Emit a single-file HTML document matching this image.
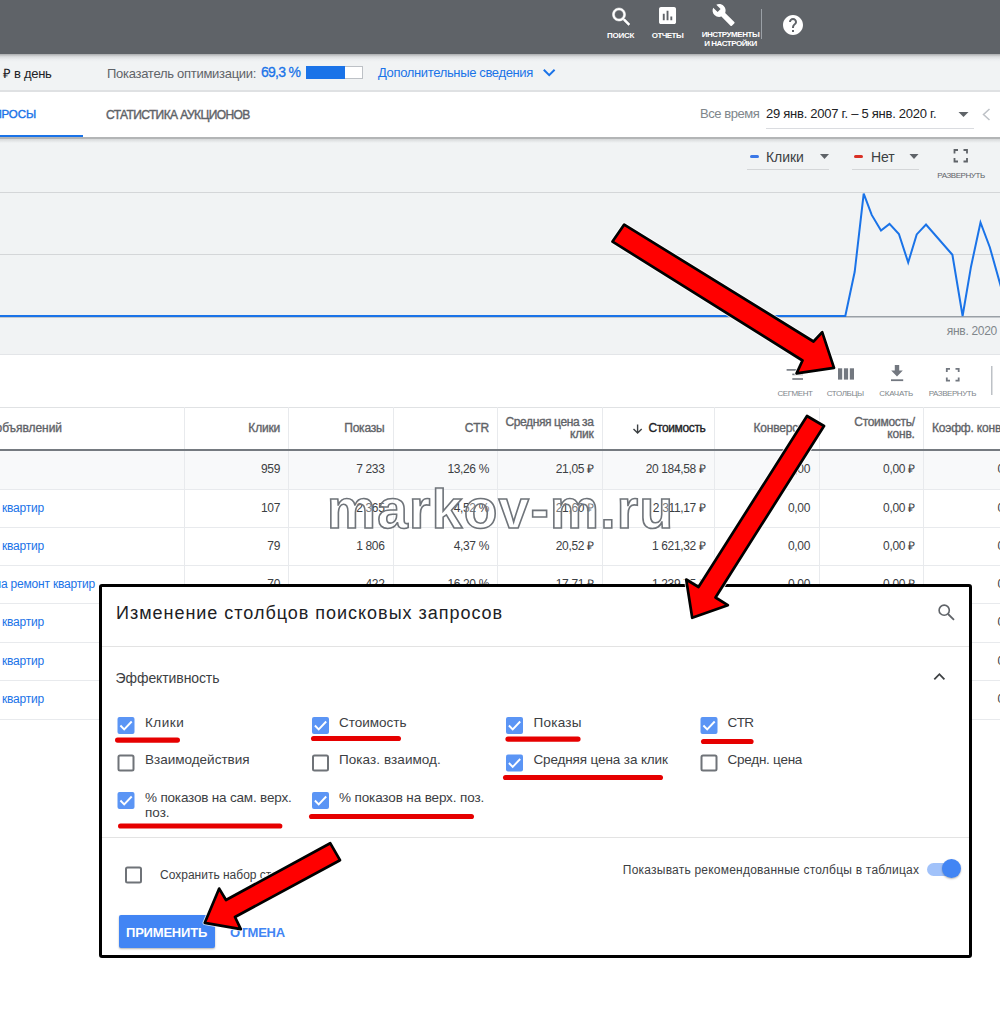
<!DOCTYPE html>
<html><head><meta charset="utf-8"><style>
html,body{margin:0;padding:0;}
body{width:1000px;height:1017px;position:relative;overflow:hidden;background:#fff;font-family:"Liberation Sans",sans-serif;}
.t{position:absolute;white-space:nowrap;}
.r{position:absolute;}
svg{position:absolute;overflow:visible;}
</style></head><body>

<div class="r" style="left:0px;top:53px;width:1000px;height:38px;background:#f1f3f4;"></div>
<div class="r" style="left:0px;top:53.5px;width:1000px;height:8px;background:linear-gradient(#aaacae,#dcdee0 35%,#eceef0 70%,#f1f3f4);"></div>
<div class="r" style="left:0px;top:0px;width:1000px;height:53.5px;background:#5f6368;"></div>
<div class="r" style="left:0px;top:90px;width:1000px;height:2px;background:#dfe1e3;"></div>
<svg style="left:0;top:0" width="1000" height="53">
<path transform="translate(609.5,5) scale(1)" fill="#fff" stroke="#fff" stroke-width="0.5" d="M15.5 14h-.79l-.28-.27C15.41 12.59 16 11.11 16 9.5 16 5.91 13.09 3 9.5 3S3 5.91 3 9.5 5.91 16 9.5 16c1.61 0 3.09-.59 4.23-1.57l.27.28v.79l5 4.99L20.49 19l-4.99-5zm-6 0C7.01 14 5 11.99 5 9.5S7.01 5 9.5 5 14 7.01 14 9.5 11.99 14 9.5 14z"/>
<path transform="translate(656.2,4.2) scale(0.944)" fill="#fff" d="M19 3H5c-1.1 0-2 .9-2 2v14c0 1.1.9 2 2 2h14c1.1 0 2-.9 2-2V5c0-1.1-.9-2-2-2zM9 17H7v-7h2v7zm4 0h-2V7h2v10zm4 0h-2v-4h2v4z"/>
<path transform="translate(711.6,3) scale(1.0)" fill="#fff" d="M22.7 19l-9.1-9.1c.9-2.3.4-5-1.5-6.9-2-2-5-2.4-7.4-1.3L9 6 6 9 1.6 4.7C.4 7.1.9 10.1 2.9 12.1c1.9 1.9 4.6 2.4 6.9 1.5l9.1 9.1c.4.4 1 .4 1.4 0l2.3-2.3c.5-.4.5-1.1.1-1.4z"/>
<rect x="761" y="9" width="1" height="30" fill="#9aa0a6"/>
<path transform="translate(781,12.9)" fill="#fff" d="M12 2C6.48 2 2 6.48 2 12s4.48 10 10 10 10-4.48 10-10S17.52 2 12 2zm1 17h-2v-2h2v2zm2.07-7.750l-.9.92C13.45 12.9 13 13.5 13 15h-2v-.5c0-1.1.45-2.1 1.17-2.83l1.24-1.26c.37-.36.59-.86.59-1.41 0-1.1-.9-2-2-2s-2 .9-2 2H8c0-2.21 1.790-4 4-4s4 1.79 4 4c0 .88-.36 1.68-.93 2.25z"/>
</svg>
<div class="t" style="left:420.5px;width:400px;text-align:center;top:32.23px;font-size:8px;line-height:8px;color:#fff;font-weight:700;letter-spacing:-0.25px;">ПОИСК</div>
<div class="t" style="left:467.5px;width:400px;text-align:center;top:31.73px;font-size:8px;line-height:8px;color:#fff;font-weight:700;letter-spacing:-0.55px;">ОТЧЕТЫ</div>
<div class="t" style="left:530.5px;width:400px;text-align:center;top:31.23px;font-size:8px;line-height:8px;color:#fff;font-weight:700;letter-spacing:-0.45px;">ИНСТРУМЕНТЫ</div>
<div class="t" style="left:530.5px;width:400px;text-align:center;top:40.23px;font-size:8px;line-height:8px;color:#fff;font-weight:700;letter-spacing:-0.45px;">И НАСТРОЙКИ</div>
<div class="t" style="left:3px;top:66.80px;font-size:13px;line-height:13px;color:#202124;font-weight:400;letter-spacing:-0.3px;">₽ в день</div>
<div class="t" style="left:107px;top:66.80px;font-size:13px;line-height:13px;color:#5f6368;font-weight:400;letter-spacing:-0.28px;">Показатель оптимизации:</div>
<div class="t" style="left:261px;top:65.35px;font-size:14px;line-height:14px;color:#1a73e8;font-weight:400;letter-spacing:-0.75px;-webkit-text-stroke:0.3px currentColor;">69,3 %</div>
<div class="r" style="left:305.5px;top:66.3px;width:57.5px;height:12.5px;background:#fff;box-sizing:border-box;border:1px solid #bdc1c6;"></div>
<div class="r" style="left:305.5px;top:66.3px;width:39px;height:12.5px;background:#1a73e8;"></div>
<div class="t" style="left:378px;top:65.80px;font-size:13px;line-height:13px;color:#1a73e8;font-weight:400;letter-spacing:-0.35px;">Дополнительные сведения</div>
<svg style="left:0;top:0" width="1000" height="100">
<path d="M543.8 69.8 L549.2 75.2 L554.6 69.8" fill="none" stroke="#1a73e8" stroke-width="2"/>
</svg>
<div class="r" style="left:0px;top:92px;width:1000px;height:45px;background:#fff;"></div>
<div class="r" style="left:0px;top:135px;width:83px;height:2.5px;background:#1a73e8;"></div>
<div class="r" style="left:0px;top:137px;width:1000px;height:1.5px;background:#b3b5b6;"></div>
<div class="r" style="left:0px;top:138.5px;width:1000px;height:4px;background:linear-gradient(#d6d8d9,#f1f3f4);"></div>
<div class="t" style="right:964px;text-align:right;top:109.27px;font-size:11.5px;line-height:11.5px;color:#1a73e8;font-weight:400;letter-spacing:-0.1px;-webkit-text-stroke:0.4px currentColor;">ЗАПРОСЫ</div>
<div class="t" style="left:106px;top:108.84px;font-size:12px;line-height:12px;color:#5f6368;font-weight:400;letter-spacing:-0.6px;-webkit-text-stroke:0.4px currentColor;">СТАТИСТИКА АУКЦИОНОВ</div>
<div class="t" style="left:700px;top:106.50px;font-size:13px;line-height:13px;color:#80868b;font-weight:400;letter-spacing:-0.45px;">Все время</div>
<div class="t" style="left:766px;top:106.50px;font-size:13px;line-height:13px;color:#202124;font-weight:400;letter-spacing:-0.26px;">29 янв. 2007 г. – 5 янв. 2020 г.</div>
<div class="r" style="left:766px;top:127.5px;width:208px;height:1px;background:#dadce0;"></div>
<svg style="left:0;top:0" width="1000" height="140">
<path d="M958.5 112 L968.5 112 L963.5 117z" fill="#5f6368"/>
<path d="M989.5 109 L983.5 114.5 L989.5 120" fill="none" stroke="#bdc1c6" stroke-width="1.5"/>
</svg>
<div class="r" style="left:0px;top:142.5px;width:1000px;height:211.5px;background:#f1f3f4;"></div>
<div class="r" style="left:747px;top:169px;width:82px;height:1px;background:#d4d6d8;"></div>
<div class="r" style="left:852px;top:169px;width:67px;height:1px;background:#d4d6d8;"></div>
<div class="r" style="left:749.8px;top:154.9px;width:9px;height:3.6px;background:#3b78e7;border-radius:1.8px;"></div>
<div class="r" style="left:854.2px;top:154.9px;width:9.2px;height:3.6px;background:#d93025;border-radius:1.8px;"></div>
<div class="t" style="left:766px;top:149.65px;font-size:14px;line-height:14px;color:#3c4043;font-weight:400;letter-spacing:-0.05px;">Клики</div>
<div class="t" style="left:871px;top:149.65px;font-size:14px;line-height:14px;color:#3c4043;font-weight:400;letter-spacing:-0.1px;">Нет</div>
<div class="t" style="left:761px;width:400px;text-align:center;top:171.73px;font-size:8px;line-height:8px;color:#5f6368;font-weight:400;letter-spacing:-0.45px;">РАЗВЕРНУТЬ</div>
<svg style="left:0;top:0" width="1000" height="360">
<path d="M820 154 L829 154 L824.5 159z" fill="#5f6368"/>
<path d="M909.5 154 L918.5 154 L914 159z" fill="#5f6368"/>
<path d="M954.5 153.5 v-3.5 h3.5 M963.5 150 h3.5 v3.5 M967 158 v3.5 h-3.5 M958 161.5 h-3.5 v-3.5" fill="none" stroke="#5f6368" stroke-width="1.8"/>
<rect x="0" y="192" width="1000" height="1" fill="#d4d6d8"/>
<rect x="0" y="254" width="1000" height="1" fill="#d4d6d8"/>
<rect x="0" y="316" width="1000" height="1.5" fill="#9aa0a6"/>
<polyline points="0,316 845.3,316 854.7,271.8 863.7,193.6 871.7,214.9 881,230.5 889.5,223.9 898.9,234 908.2,262.5 916.7,234.4 926,224.6 952.4,254.8 962.6,316 971,266.7 980.5,222.5 989.8,247.2 1001,287" fill="none" stroke="#1a73e8" stroke-width="2" stroke-linejoin="miter"/>
</svg>
<div class="t" style="right:3px;text-align:right;top:325.14px;font-size:12px;line-height:12px;color:#80868b;font-weight:400;letter-spacing:-0.3px;">янв. 2020</div>
<div class="r" style="left:0px;top:354px;width:1000px;height:53px;background:#fff;"></div>
<div class="r" style="left:0px;top:354px;width:1000px;height:1px;background:#e3e5e8;"></div>
<div class="t" style="left:595px;width:400px;text-align:center;top:390.23px;font-size:8px;line-height:8px;color:#80868b;font-weight:400;letter-spacing:-0.4px;">СЕГМЕНТ</div>
<div class="t" style="left:645.2px;width:400px;text-align:center;top:390.23px;font-size:8px;line-height:8px;color:#80868b;font-weight:400;letter-spacing:-0.4px;">СТОЛБЦЫ</div>
<div class="t" style="left:696.2px;width:400px;text-align:center;top:390.23px;font-size:8px;line-height:8px;color:#80868b;font-weight:400;letter-spacing:-0.2px;">СКАЧАТЬ</div>
<div class="t" style="left:752.4px;width:400px;text-align:center;top:390.23px;font-size:8px;line-height:8px;color:#80868b;font-weight:400;letter-spacing:-0.45px;">РАЗВЕРНУТЬ</div>
<svg style="left:0;top:0" width="1000" height="410">
<rect x="786.6" y="369.1" width="11.5" height="1.6" fill="#737880"/>
<rect x="792.3" y="373.6" width="10.7" height="1.6" fill="#737880"/>
<rect x="792.3" y="378.2" width="10.7" height="1.6" fill="#737880"/>
<rect x="838" y="368.3" width="4.2" height="11.3" fill="#737880"/>
<rect x="843.9" y="368.3" width="4.2" height="11.3" fill="#737880"/>
<rect x="849.8" y="368.3" width="4.2" height="11.3" fill="#737880"/>
<path d="M894.8 365 h4.4 v5.5 h3.6 l-5.8 6 -5.8-6 h3.6z" fill="#737880"/>
<rect x="891" y="379.3" width="12.2" height="1.8" fill="#737880"/>
<path d="M946.8 372 v-3.2 h3.2 M955.5 368.8 h3.2 v3.2 M958.7 377.5 v3.2 h-3.2 M950 380.7 h-3.2 v-3.2" fill="none" stroke="#737880" stroke-width="1.8"/>
<rect x="991" y="366" width="1.5" height="29" fill="#bdc1c6"/>
</svg>
<div class="r" style="left:0px;top:406.5px;width:1000px;height:1px;background:#e0e2e4;"></div>
<div class="r" style="left:0px;top:451px;width:1000px;height:38px;background:#f8f9fa;"></div>
<div class="r" style="left:0px;top:488.6px;width:1000px;height:1px;background:#e8eaed;"></div>
<div class="r" style="left:0px;top:527.2px;width:1000px;height:1px;background:#e8eaed;"></div>
<div class="r" style="left:0px;top:565.3px;width:1000px;height:1px;background:#e8eaed;"></div>
<div class="r" style="left:0px;top:603.4px;width:1000px;height:1px;background:#e8eaed;"></div>
<div class="r" style="left:0px;top:641.8px;width:1000px;height:1px;background:#e8eaed;"></div>
<div class="r" style="left:0px;top:680.4px;width:1000px;height:1px;background:#e8eaed;"></div>
<div class="r" style="left:0px;top:718.5px;width:1000px;height:1px;background:#e8eaed;"></div>
<div class="r" style="left:183.5px;top:407px;width:1px;height:312px;background:#e8eaed;"></div>
<div class="r" style="left:288px;top:407px;width:1px;height:312px;background:#e8eaed;"></div>
<div class="r" style="left:392.5px;top:407px;width:1px;height:312px;background:#e8eaed;"></div>
<div class="r" style="left:497px;top:407px;width:1px;height:312px;background:#e8eaed;"></div>
<div class="r" style="left:601.5px;top:407px;width:1px;height:312px;background:#e8eaed;"></div>
<div class="r" style="left:714px;top:407px;width:1px;height:312px;background:#e8eaed;"></div>
<div class="r" style="left:818.5px;top:407px;width:1px;height:312px;background:#e8eaed;"></div>
<div class="r" style="left:922.5px;top:407px;width:1px;height:312px;background:#e8eaed;"></div>
<div class="r" style="left:0px;top:448.8px;width:1000px;height:2px;background:#757a80;"></div>
<div class="t" style="right:938px;text-align:right;top:422.34px;font-size:12px;line-height:12px;color:#5f6368;font-weight:400;letter-spacing:-0.05px;-webkit-text-stroke:0.35px currentColor;">объявлений</div>
<div class="t" style="right:720px;text-align:right;top:422.34px;font-size:12px;line-height:12px;color:#5f6368;font-weight:400;letter-spacing:-0.2px;-webkit-text-stroke:0.35px currentColor;">Клики</div>
<div class="t" style="right:615.5px;text-align:right;top:422.34px;font-size:12px;line-height:12px;color:#5f6368;font-weight:400;letter-spacing:-0.2px;-webkit-text-stroke:0.35px currentColor;">Показы</div>
<div class="t" style="right:511px;text-align:right;top:422.34px;font-size:12px;line-height:12px;color:#5f6368;font-weight:400;letter-spacing:-0.1px;-webkit-text-stroke:0.35px currentColor;">CTR</div>
<div class="t" style="right:406.5px;text-align:right;top:415.64px;font-size:12px;line-height:12px;color:#5f6368;font-weight:400;letter-spacing:-0.4px;-webkit-text-stroke:0.35px currentColor;">Средняя цена за</div>
<div class="t" style="right:406.5px;text-align:right;top:428.24px;font-size:12px;line-height:12px;color:#5f6368;font-weight:400;letter-spacing:-0.2px;-webkit-text-stroke:0.35px currentColor;">клик</div>
<div class="t" style="right:294.5px;text-align:right;top:422.44px;font-size:12px;line-height:12px;color:#202124;font-weight:400;letter-spacing:-0.35px;-webkit-text-stroke:0.35px currentColor;">Стоимость</div>
<svg style="left:0;top:0" width="1000" height="450">
<path d="M637.6 424.5 v8.5 M633.5 429 l4.1 4.1 4.1-4.1" fill="none" stroke="#3c4043" stroke-width="1.4"/>
</svg>
<div class="t" style="left:753.5px;top:422.34px;font-size:12px;line-height:12px;color:#5f6368;font-weight:400;letter-spacing:-0.2px;-webkit-text-stroke:0.35px currentColor;">Конверсии</div>
<div class="t" style="right:85.29999999999995px;text-align:right;top:415.64px;font-size:12px;line-height:12px;color:#5f6368;font-weight:400;letter-spacing:-0.3px;-webkit-text-stroke:0.35px currentColor;">Стоимость/</div>
<div class="t" style="right:85.29999999999995px;text-align:right;top:428.24px;font-size:12px;line-height:12px;color:#5f6368;font-weight:400;letter-spacing:-0.2px;-webkit-text-stroke:0.35px currentColor;">конв.</div>
<div class="t" style="left:932px;top:422.34px;font-size:12px;line-height:12px;color:#5f6368;font-weight:400;letter-spacing:-0.2px;-webkit-text-stroke:0.35px currentColor;">Коэфф. конверсии</div>
<div class="t" style="right:720px;text-align:right;top:463.34px;font-size:12px;line-height:12px;color:#3c4043;font-weight:400;letter-spacing:-0.35px;">959</div>
<div class="t" style="right:615.5px;text-align:right;top:463.34px;font-size:12px;line-height:12px;color:#3c4043;font-weight:400;letter-spacing:-0.35px;">7 233</div>
<div class="t" style="right:511px;text-align:right;top:463.34px;font-size:12px;line-height:12px;color:#3c4043;font-weight:400;letter-spacing:-0.35px;">13,26 %</div>
<div class="t" style="right:406.29999999999995px;text-align:right;top:463.34px;font-size:12px;line-height:12px;color:#3c4043;font-weight:400;letter-spacing:-0.35px;">21,05 ₽</div>
<div class="t" style="right:294.5px;text-align:right;top:463.34px;font-size:12px;line-height:12px;color:#3c4043;font-weight:400;letter-spacing:-0.35px;">20 184,58 ₽</div>
<div class="t" style="right:190px;text-align:right;top:463.34px;font-size:12px;line-height:12px;color:#3c4043;font-weight:400;letter-spacing:-0.35px;">0,00</div>
<div class="t" style="right:85.29999999999995px;text-align:right;top:463.34px;font-size:12px;line-height:12px;color:#3c4043;font-weight:400;letter-spacing:-0.35px;">0,00 ₽</div>
<div class="t" style="left:997.5px;top:463.34px;font-size:12px;line-height:12px;color:#3c4043;font-weight:400;letter-spacing:-0.3px;">0,00 %</div>
<div class="t" style="right:956px;text-align:right;top:502.04px;font-size:12px;line-height:12px;color:#1a73e8;font-weight:400;letter-spacing:-0.2px;">квартир</div>
<div class="t" style="right:720px;text-align:right;top:502.04px;font-size:12px;line-height:12px;color:#3c4043;font-weight:400;letter-spacing:-0.35px;">107</div>
<div class="t" style="right:615.5px;text-align:right;top:502.04px;font-size:12px;line-height:12px;color:#3c4043;font-weight:400;letter-spacing:-0.35px;">2 365</div>
<div class="t" style="right:511px;text-align:right;top:502.04px;font-size:12px;line-height:12px;color:#3c4043;font-weight:400;letter-spacing:-0.35px;">4,52 %</div>
<div class="t" style="right:406.29999999999995px;text-align:right;top:502.04px;font-size:12px;line-height:12px;color:#3c4043;font-weight:400;letter-spacing:-0.35px;">21,60 ₽</div>
<div class="t" style="right:294.5px;text-align:right;top:502.04px;font-size:12px;line-height:12px;color:#3c4043;font-weight:400;letter-spacing:-0.35px;">2 311,17 ₽</div>
<div class="t" style="right:190px;text-align:right;top:502.04px;font-size:12px;line-height:12px;color:#3c4043;font-weight:400;letter-spacing:-0.35px;">0,00</div>
<div class="t" style="right:85.29999999999995px;text-align:right;top:502.04px;font-size:12px;line-height:12px;color:#3c4043;font-weight:400;letter-spacing:-0.35px;">0,00 ₽</div>
<div class="t" style="left:997.5px;top:502.04px;font-size:12px;line-height:12px;color:#3c4043;font-weight:400;letter-spacing:-0.3px;">0,00 %</div>
<div class="t" style="right:956px;text-align:right;top:539.84px;font-size:12px;line-height:12px;color:#1a73e8;font-weight:400;letter-spacing:-0.2px;">квартир</div>
<div class="t" style="right:720px;text-align:right;top:539.84px;font-size:12px;line-height:12px;color:#3c4043;font-weight:400;letter-spacing:-0.35px;">79</div>
<div class="t" style="right:615.5px;text-align:right;top:539.84px;font-size:12px;line-height:12px;color:#3c4043;font-weight:400;letter-spacing:-0.35px;">1 806</div>
<div class="t" style="right:511px;text-align:right;top:539.84px;font-size:12px;line-height:12px;color:#3c4043;font-weight:400;letter-spacing:-0.35px;">4,37 %</div>
<div class="t" style="right:406.29999999999995px;text-align:right;top:539.84px;font-size:12px;line-height:12px;color:#3c4043;font-weight:400;letter-spacing:-0.35px;">20,52 ₽</div>
<div class="t" style="right:294.5px;text-align:right;top:539.84px;font-size:12px;line-height:12px;color:#3c4043;font-weight:400;letter-spacing:-0.35px;">1 621,32 ₽</div>
<div class="t" style="right:190px;text-align:right;top:539.84px;font-size:12px;line-height:12px;color:#3c4043;font-weight:400;letter-spacing:-0.35px;">0,00</div>
<div class="t" style="right:85.29999999999995px;text-align:right;top:539.84px;font-size:12px;line-height:12px;color:#3c4043;font-weight:400;letter-spacing:-0.35px;">0,00 ₽</div>
<div class="t" style="left:997.5px;top:539.84px;font-size:12px;line-height:12px;color:#3c4043;font-weight:400;letter-spacing:-0.3px;">0,00 %</div>
<div class="t" style="right:905px;text-align:right;top:578.44px;font-size:12px;line-height:12px;color:#1a73e8;font-weight:400;letter-spacing:-0.2px;">на ремонт квартир</div>
<div class="t" style="right:720px;text-align:right;top:578.44px;font-size:12px;line-height:12px;color:#3c4043;font-weight:400;letter-spacing:-0.35px;">70</div>
<div class="t" style="right:615.5px;text-align:right;top:578.44px;font-size:12px;line-height:12px;color:#3c4043;font-weight:400;letter-spacing:-0.35px;">422</div>
<div class="t" style="right:511px;text-align:right;top:578.44px;font-size:12px;line-height:12px;color:#3c4043;font-weight:400;letter-spacing:-0.35px;">16,20 %</div>
<div class="t" style="right:406.29999999999995px;text-align:right;top:578.44px;font-size:12px;line-height:12px;color:#3c4043;font-weight:400;letter-spacing:-0.35px;">17,71 ₽</div>
<div class="t" style="right:294.5px;text-align:right;top:578.44px;font-size:12px;line-height:12px;color:#3c4043;font-weight:400;letter-spacing:-0.35px;">1 239,75 ₽</div>
<div class="t" style="right:190px;text-align:right;top:578.44px;font-size:12px;line-height:12px;color:#3c4043;font-weight:400;letter-spacing:-0.35px;">0,00</div>
<div class="t" style="right:85.29999999999995px;text-align:right;top:578.44px;font-size:12px;line-height:12px;color:#3c4043;font-weight:400;letter-spacing:-0.35px;">0,00 ₽</div>
<div class="t" style="left:997.5px;top:578.44px;font-size:12px;line-height:12px;color:#3c4043;font-weight:400;letter-spacing:-0.3px;">0,00 %</div>
<div class="t" style="right:956px;text-align:right;top:616.34px;font-size:12px;line-height:12px;color:#1a73e8;font-weight:400;letter-spacing:-0.2px;">квартир</div>
<div class="t" style="left:997.5px;top:616.34px;font-size:12px;line-height:12px;color:#3c4043;font-weight:400;letter-spacing:-0.3px;">0,00 %</div>
<div class="t" style="right:956px;text-align:right;top:654.54px;font-size:12px;line-height:12px;color:#1a73e8;font-weight:400;letter-spacing:-0.2px;">квартир</div>
<div class="t" style="left:997.5px;top:654.54px;font-size:12px;line-height:12px;color:#3c4043;font-weight:400;letter-spacing:-0.3px;">0,00 %</div>
<div class="t" style="right:956px;text-align:right;top:692.74px;font-size:12px;line-height:12px;color:#1a73e8;font-weight:400;letter-spacing:-0.2px;">квартир</div>
<div class="t" style="left:997.5px;top:692.74px;font-size:12px;line-height:12px;color:#3c4043;font-weight:400;letter-spacing:-0.3px;">0,00 %</div>
<div class="t" style="left:327px;top:481.8px;font-size:55px;line-height:55px;font-weight:700;color:rgba(255,255,255,0.3);-webkit-text-stroke:1.6px #6f747a;letter-spacing:1.3px;">markov-m.ru</div>
<div class="r" style="left:99px;top:583.5px;width:873px;height:374px;background:#fff;box-sizing:border-box;border:3px solid #000;border-radius:3px;"></div>
<div class="t" style="left:116px;top:604.06px;font-size:18px;line-height:18px;color:#202124;font-weight:400;letter-spacing:0.98px;">Изменение столбцов поисковых запросов</div>
<div class="r" style="left:102px;top:646px;width:867px;height:1px;background:#e3e3e3;"></div>
<div class="t" style="left:115.6px;top:670.55px;font-size:14px;line-height:14px;color:#3c4043;font-weight:400;letter-spacing:-0.1px;">Эффективность</div>
<svg style="left:0;top:0" width="1000" height="1017">
<circle cx="944.2" cy="610.2" r="5.1" fill="none" stroke="#5f6368" stroke-width="1.6"/>
<line x1="948" y1="614" x2="954" y2="619.8" stroke="#5f6368" stroke-width="1.8"/>
<path d="M934.3 679.4 L939.4 674.2 L944.4 679.4" fill="none" stroke="#3c4043" stroke-width="1.8"/>
</svg>
<div class="t" style="left:145px;top:715.97px;font-size:13.5px;line-height:13.5px;color:#3c4043;font-weight:400;letter-spacing:0.5px;">Клики</div>
<div class="t" style="left:339px;top:715.97px;font-size:13.5px;line-height:13.5px;color:#3c4043;font-weight:400;">Стоимость</div>
<div class="t" style="left:533.4px;top:715.97px;font-size:13.5px;line-height:13.5px;color:#3c4043;font-weight:400;letter-spacing:0.3px;">Показы</div>
<div class="t" style="left:727.6px;top:715.97px;font-size:13.5px;line-height:13.5px;color:#3c4043;font-weight:400;letter-spacing:-0.7px;">CTR</div>
<div class="t" style="left:145px;top:753.47px;font-size:13.5px;line-height:13.5px;color:#3c4043;font-weight:400;">Взаимодействия</div>
<div class="t" style="left:339px;top:753.47px;font-size:13.5px;line-height:13.5px;color:#3c4043;font-weight:400;letter-spacing:0.07px;">Показ. взаимод.</div>
<div class="t" style="left:533.4px;top:753.47px;font-size:13.5px;line-height:13.5px;color:#3c4043;font-weight:400;letter-spacing:-0.12px;">Средняя цена за клик</div>
<div class="t" style="left:727.6px;top:753.47px;font-size:13.5px;line-height:13.5px;color:#3c4043;font-weight:400;letter-spacing:-0.26px;">Средн. цена</div>
<div class="t" style="left:145px;top:790.77px;font-size:13.5px;line-height:13.5px;color:#3c4043;font-weight:400;letter-spacing:-0.18px;">% показов на сам. верх.</div>
<div class="t" style="left:339px;top:790.77px;font-size:13.5px;line-height:13.5px;color:#3c4043;font-weight:400;letter-spacing:-0.13px;">% показов на верх. поз.</div>
<div class="t" style="left:145px;top:806.17px;font-size:13.5px;line-height:13.5px;color:#3c4043;font-weight:400;">поз.</div>
<svg style="left:0;top:0" width="1000" height="1017">
<rect x="117.5" y="717" width="17" height="17" rx="2" fill="#5b95f5"/>
<path d="M120.4 725.5 L124.2 729.4 L131.7 721.5" fill="none" stroke="#fff" stroke-width="1.9"/>
<rect x="312" y="717" width="17" height="17" rx="2" fill="#5b95f5"/>
<path d="M314.9 725.5 L318.7 729.4 L326.2 721.5" fill="none" stroke="#fff" stroke-width="1.9"/>
<rect x="506" y="717" width="17" height="17" rx="2" fill="#5b95f5"/>
<path d="M508.9 725.5 L512.7 729.4 L520.2 721.5" fill="none" stroke="#fff" stroke-width="1.9"/>
<rect x="700.5" y="717" width="17" height="17" rx="2" fill="#5b95f5"/>
<path d="M703.4 725.5 L707.2 729.4 L714.7 721.5" fill="none" stroke="#fff" stroke-width="1.9"/>
<rect x="118.5" y="755.5" width="15" height="15" rx="1.5" fill="none" stroke="#6f7378" stroke-width="2"/>
<rect x="313" y="755.5" width="15" height="15" rx="1.5" fill="none" stroke="#6f7378" stroke-width="2"/>
<rect x="506" y="754.5" width="17" height="17" rx="2" fill="#5b95f5"/>
<path d="M508.9 763.0 L512.7 766.9 L520.2 759.0" fill="none" stroke="#fff" stroke-width="1.9"/>
<rect x="701.5" y="755.5" width="15" height="15" rx="1.5" fill="none" stroke="#6f7378" stroke-width="2"/>
<rect x="117.5" y="792" width="17" height="17" rx="2" fill="#5b95f5"/>
<path d="M120.4 800.5 L124.2 804.4 L131.7 796.5" fill="none" stroke="#fff" stroke-width="1.9"/>
<rect x="312" y="792" width="17" height="17" rx="2" fill="#5b95f5"/>
<path d="M314.9 800.5 L318.7 804.4 L326.2 796.5" fill="none" stroke="#fff" stroke-width="1.9"/>
<rect x="126" y="867.5" width="15" height="15" rx="1.5" fill="none" stroke="#6f7378" stroke-width="2"/>
<line x1="117.6" y1="740.1" x2="177.4" y2="740.1" stroke="#e60000" stroke-width="5.2" stroke-linecap="round"/>
<line x1="313.6" y1="738.5" x2="398.4" y2="738.5" stroke="#e60000" stroke-width="5.2" stroke-linecap="round"/>
<line x1="508.0" y1="739.1" x2="578.0" y2="739.1" stroke="#e60000" stroke-width="5.2" stroke-linecap="round"/>
<line x1="703.6" y1="741.5" x2="751.0" y2="741.5" stroke="#e60000" stroke-width="5.2" stroke-linecap="round"/>
<line x1="505.6" y1="777.5" x2="660.4" y2="777.5" stroke="#e60000" stroke-width="5.2" stroke-linecap="round"/>
<line x1="120.6" y1="826" x2="279.79999999999995" y2="826" stroke="#e60000" stroke-width="5.2" stroke-linecap="round"/>
<line x1="311.6" y1="816.5" x2="471.4" y2="816.5" stroke="#e60000" stroke-width="5.2" stroke-linecap="round"/>
</svg>
<div class="r" style="left:102px;top:837px;width:867px;height:1px;background:#e3e3e3;"></div>
<div class="t" style="left:160px;top:869.44px;font-size:12px;line-height:12px;color:#3c4043;font-weight:400;">Сохранить набор сто</div>
<div class="t" style="right:80.79999999999995px;text-align:right;top:863.64px;font-size:12px;line-height:12px;color:#3c4043;font-weight:400;letter-spacing:0.22px;">Показывать рекомендованные столбцы в таблицах</div>
<div class="r" style="left:927px;top:862.5px;width:30px;height:13.5px;background:#a1c2fa;border-radius:7px;"></div>
<div class="r" style="left:942px;top:859px;width:19px;height:19px;background:#4285f4;border-radius:50%;box-shadow:0 1px 2px rgba(0,0,0,0.3);"></div>
<div class="r" style="left:118.8px;top:915.3px;width:96px;height:33px;background:#4285f4;border-radius:2px;box-shadow:0 1px 2px rgba(0,0,0,0.3);"></div>
<div class="t" style="left:126px;top:925.70px;font-size:13px;line-height:13px;color:#fff;font-weight:700;letter-spacing:-0.2px;">ПРИМЕНИТЬ</div>
<div class="t" style="left:230px;top:925.70px;font-size:13px;line-height:13px;color:#4285f4;font-weight:700;letter-spacing:-0.25px;">ОТМЕНА</div>
<svg style="left:0;top:0" width="1000" height="1017">
<g fill="none" stroke="#fff" stroke-opacity="0.8" stroke-width="4.6" stroke-linejoin="round">
<polygon points="624.2,224.6 612.5,241.6 802.5,360.5 796.6,373.4 834,367.8 822.2,332.2 813.5,341.5"/>
<polygon points="807,416 824,426 715.5,597.5 727.8,605.2 692.2,617.8 686.2,579.5 698.5,587"/>
<polygon points="330.2,843.2 340,860.2 235,917 240.8,929.2 204.8,922.8 219.2,888.6 226,900"/>
</g>
<g fill="#ff0000" stroke="#000" stroke-width="2.7" stroke-linejoin="round">
<polygon points="624.2,224.6 612.5,241.6 802.5,360.5 796.6,373.4 834,367.8 822.2,332.2 813.5,341.5"/>
<polygon points="807,416 824,426 715.5,597.5 727.8,605.2 692.2,617.8 686.2,579.5 698.5,587"/>
<polygon points="330.2,843.2 340,860.2 235,917 240.8,929.2 204.8,922.8 219.2,888.6 226,900"/>
</g>
</svg>

</body></html>
